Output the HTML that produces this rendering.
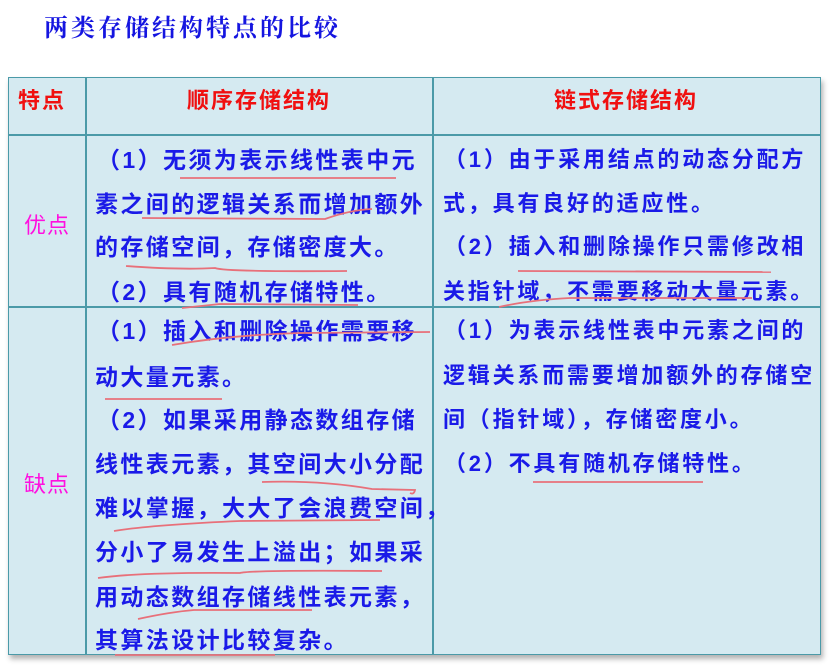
<!DOCTYPE html>
<html><head><meta charset="utf-8"><style>
body{margin:0;width:837px;height:671px;background:#fff;position:relative;overflow:hidden;font-family:"Liberation Sans","Noto Sans CJK SC",sans-serif}
.t{position:absolute;left:44px;top:10px;font-size:24px;font-weight:bold;color:#1515e0;letter-spacing:3px;line-height:32px;font-family:"Noto Serif CJK SC","Noto Sans CJK SC",serif}
.tb{position:absolute;left:8px;top:77px;width:811px;height:576px;background:#d5eaf1;border:1.5px solid #4b9aa8;box-shadow:2px 4px 5px rgba(0,0,0,0.3)}
.v{position:absolute;background:#4b9aa8;width:1.5px}
.h{position:absolute;background:#4b9aa8;height:1.5px}
.r{position:absolute;color:#f01010;font-size:22px;font-weight:bold;line-height:30px;letter-spacing:2px}
.p{position:absolute;color:#ff10e0;font-size:22px;line-height:30px;letter-spacing:1px}
.l{position:absolute;color:#1a1ae8;font-size:23px;font-weight:bold;line-height:44px;white-space:nowrap;letter-spacing:2.4px}
.R{font-size:22px;letter-spacing:2.8px}
svg{position:absolute;left:0;top:0}
</style></head><body>
<div class="t">两类存储结构特点的比较</div>
<div class="tb"></div>
<div class="v" style="left:85px;top:77px;height:578px"></div>
<div class="v" style="left:432px;top:77px;height:578px"></div>
<div class="h" style="left:8px;top:134px;width:813px"></div>
<div class="h" style="left:8px;top:306px;width:813px"></div>
<div class="r" style="left:18px;top:86px">特点</div>
<div class="r" style="left:187px;top:86px">顺序存储结构</div>
<div class="r" style="left:554px;top:86px">链式存储结构</div>
<div class="p" style="left:24px;top:211px">优点</div>
<div class="p" style="left:24px;top:470px">缺点</div>

<div class="l" style="left:97px;top:138px">（1）无须为表示线性表中元</div>
<div class="l" style="left:95px;top:182px">素之间的逻辑关系而增加额外</div>
<div class="l" style="left:95px;top:225px">的存储空间，存储密度大。</div>
<div class="l" style="left:97px;top:270px">（2）具有随机存储特性。</div>
<div class="l" style="left:97px;top:309px">（1）插入和删除操作需要移</div>
<div class="l" style="left:95px;top:355px">动大量元素。</div>
<div class="l" style="left:97px;top:398px">（2）如果采用静态数组存储</div>
<div class="l" style="left:95px;top:442px">线性表元素，其空间大小分配</div>
<div class="l" style="left:95px;top:486px">难以掌握，大大了会浪费空间，</div>
<div class="l" style="left:95px;top:530px">分小了易发生上溢出；如果采</div>
<div class="l" style="left:95px;top:575px">用动态数组存储线性表元素，</div>
<div class="l" style="left:95px;top:618px">其算法设计比较复杂。</div>

<div class="l R" style="left:444px;top:138px">（1）由于采用结点的动态分配方</div>
<div class="l R" style="left:443px;top:182px">式，具有良好的适应性。</div>
<div class="l R" style="left:444px;top:225px">（2）插入和删除操作只需修改相</div>
<div class="l R" style="left:443px;top:270px">关指针域，不需要移动大量元素。</div>
<div class="l R" style="left:444px;top:309px">（1）为表示线性表中元素之间的</div>
<div class="l R" style="left:443px;top:354px">逻辑关系而需要增加额外的存储空</div>
<div class="l R" style="left:443px;top:398px">间（指针域），存储密度小。</div>
<div class="l R" style="left:444px;top:442px">（2）不具有随机存储特性。</div>

<svg width="837" height="671" fill="none" stroke="#e8707a" stroke-width="1.8">
<path d="M180 178 L396 178"/>
<path d="M142 218 L325 219 Q350 210 372 209"/>
<path d="M126 266 Q180 270 215 268 Q225 272 347 271"/>
<path d="M182 308 Q210 305 220 304 L358 305"/>
<path d="M172 345 Q230 335 300 333 L430 332"/>
<path d="M105 399 L222 399"/>
<path d="M262 482 Q320 480 372 489 L415 490 Q414 495 410 493"/>
<path d="M114 531 Q150 525 240 521 L380 520"/>
<path d="M98 578 Q140 572 240 573 Q250 570 382 571"/>
<path d="M138 619 Q170 612 194 610 L312 610"/>
<path d="M115 655 L275 655"/>
<path d="M518 271 L771 272"/>
<path d="M499 307 Q530 300 570 298 L752 298"/>
<path d="M533 482 L703 482"/>
</svg>
</body></html>
